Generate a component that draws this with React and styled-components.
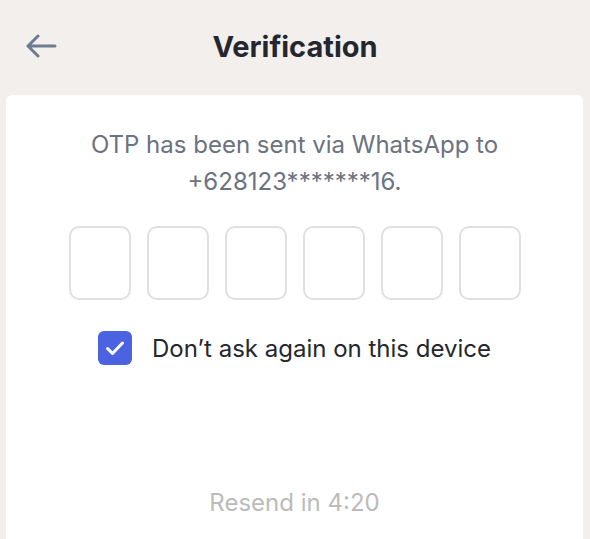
import React, { useState } from "react";
import styled, { createGlobalStyle } from "styled-components";

const GlobalStyle = createGlobalStyle`
  html, body {
    margin: 0;
    padding: 0;
    background: #f3efec;
    font-family: Inter, "Noto Sans", sans-serif;
    height: 100%;
    overflow: hidden;
  }
`;

const Screen = styled.div`
  display: flex;
  flex-direction: column;
  height: 539px;
`;

const Header = styled.header`
  position: relative;
  display: flex;
  align-items: center;
  justify-content: center;
  height: 95px;
  padding-bottom: 3px;
  box-sizing: border-box;
`;

const BackButton = styled.button`
  position: absolute;
  left: 24px;
  top: 32px;
  display: flex;
  align-items: center;
  justify-content: center;
  width: 34px;
  height: 28px;
  padding: 0;
  border: none;
  background: none;
  cursor: pointer;
`;

const Title = styled.h1`
  margin: 0;
  font-size: 29px;
  font-weight: 700;
  color: #24272e;
`;

const Card = styled.main`
  flex: 1;
  margin: 0 7px 0 6px;
  padding-top: 31px;
  background: #fff;
  border-radius: 6px 6px 0 0;
  display: flex;
  flex-direction: column;
  align-items: center;
`;

const Message = styled.p`
  margin: 0;
  max-width: 460px;
  text-align: center;
  font-size: 24px;
  line-height: 37px;
  color: #6b7280;
`;

const OtpRow = styled.div`
  display: flex;
  gap: 16px;
  margin-top: 26px;
`;

const OtpBox = styled.input`
  width: 62px;
  height: 74px;
  box-sizing: border-box;
  border: 2px solid #e0e0e0;
  border-radius: 10px;
  background: #fff;
  text-align: center;
  font-family: inherit;
  font-size: 28px;
  color: #24272e;
  outline: none;
`;

const CheckRow = styled.label`
  display: flex;
  align-items: center;
  gap: 20px;
  margin-top: 31px;
  cursor: pointer;
`;

const CheckBox = styled.span`
  display: flex;
  align-items: center;
  justify-content: center;
  width: 34px;
  height: 34px;
  border-radius: 6px;
  background: ${(p) => (p.checked ? "#4b63e0" : "#fff")};
  border: ${(p) => (p.checked ? "none" : "2px solid #d0d0d0")};
  box-sizing: border-box;
`;

const CheckText = styled.span`
  font-size: 24px;
  color: #24272e;
`;

const Resend = styled.p`
  margin: auto 0 22px;
  font-size: 24px;
  color: #bbbbbb;
`;

export default function App() {
  const [checked, setChecked] = useState(true);
  return (
    <>
      <GlobalStyle />
      <Screen>
        <Header>
          <BackButton aria-label="Back">
            <svg width="32" height="24" viewBox="0 0 32 24" fill="none">
              <path
                d="M30 12H3M13 2L3 12l10 10"
                stroke="#6e7b91"
                strokeWidth="3"
                strokeLinecap="round"
                strokeLinejoin="round"
              />
            </svg>
          </BackButton>
          <Title>Verification</Title>
        </Header>
        <Card>
          <Message>OTP has been sent via WhatsApp to +628123*******16.</Message>
          <OtpRow>
            {[0, 1, 2, 3, 4, 5].map((i) => (
              <OtpBox key={i} maxLength={1} inputMode="numeric" />
            ))}
          </OtpRow>
          <CheckRow onClick={() => setChecked(!checked)}>
            <CheckBox checked={checked}>
              {checked && (
                <svg width="20" height="16" viewBox="0 0 20 16" fill="none">
                  <path
                    d="M2.5 8.5l5 5L17.5 3"
                    stroke="#fff"
                    strokeWidth="3"
                    strokeLinecap="round"
                    strokeLinejoin="round"
                  />
                </svg>
              )}
            </CheckBox>
            <CheckText>Don’t ask again on this device</CheckText>
          </CheckRow>
          <Resend>Resend in 4:20</Resend>
        </Card>
      </Screen>
    </>
  );
}
